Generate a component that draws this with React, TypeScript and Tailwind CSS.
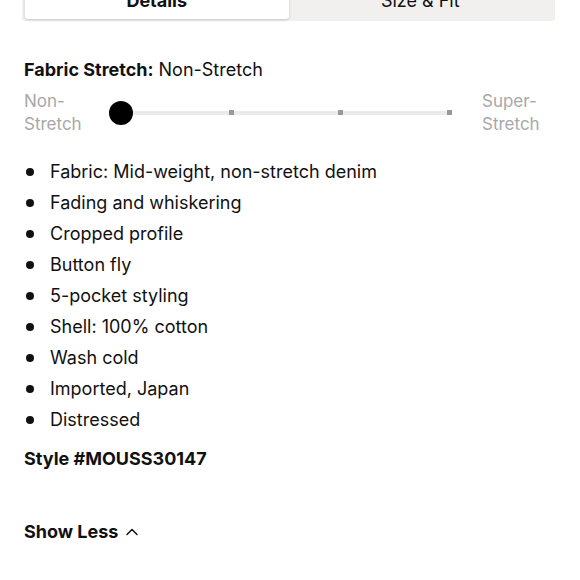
import { ChevronUp } from 'lucide-react'

export default function App() {
  const details = [
    'Fabric: Mid-weight, non-stretch denim',
    'Fading and whiskering',
    'Cropped profile',
    'Button fly',
    '5-pocket styling',
    'Shell: 100% cotton',
    'Wash cold',
    'Imported, Japan',
    'Distressed',
  ]

  return (
    <div className="w-[580px] h-[580px] overflow-hidden bg-white text-[#111] font-['Inter',sans-serif]">
      <div className="ml-[22px] mr-[25px] -mt-[21px] h-[42px] bg-[#f1f0ef] rounded-b-[3px] flex p-[3px] pb-[2px]">
        <div className="flex-1 bg-white rounded-[3px] shadow-[0_1px_3px_rgba(0,0,0,0.18)] flex items-center justify-center text-[18px] font-bold">
          Details
        </div>
        <div className="flex-1 flex items-center justify-center text-[18px]">
          Size &amp; Fit
        </div>
      </div>

      <div className="px-6 pt-[38px]">
        <p className="text-[18px] leading-[22px]">
          <span className="font-bold">Fabric Stretch:</span> Non-Stretch
        </p>

        <div className="mt-[9px] flex items-center">
          <div className="w-[70px] text-[17px] leading-[23px] text-[#a8a8a8]">
            Non-<br />Stretch
          </div>
          <div className="relative w-[330px] ml-[27px] mr-[31px] h-[24px] flex items-center">
            <div className="w-full h-[4px] bg-[#ebebeb]" />
            <div className="absolute left-[108px] top-[9px] w-[5px] h-[5px] bg-[#999]" />
            <div className="absolute left-[217px] top-[9px] w-[5px] h-[5px] bg-[#999]" />
            <div className="absolute left-[326px] top-[9px] w-[5px] h-[5px] bg-[#999]" />
            <div className="absolute -left-[12px] top-0 w-[24px] h-[24px] rounded-full bg-black" />
          </div>
          <div className="w-[74px] text-[17px] leading-[23px] text-[#a8a8a8]">
            Super-<br />Stretch
          </div>
        </div>

        <ul className="mt-[20px]">
          {details.map((d) => (
            <li key={d} className="flex items-center h-[31px] text-[18px]">
              <span className="w-[8px] h-[8px] rounded-full bg-[#111] ml-[2px] mr-[16px]" />
              {d}
            </li>
          ))}
        </ul>

        <p className="mt-[13px] text-[18px] font-bold leading-[22px]">Style #MOUSS30147</p>

        <button className="mt-[51px] flex items-center gap-[4px] text-[18px] font-bold leading-[22px]">
          Show Less <ChevronUp className="w-[20px] h-[20px]" strokeWidth={1.75} />
        </button>
      </div>
    </div>
  )
}
